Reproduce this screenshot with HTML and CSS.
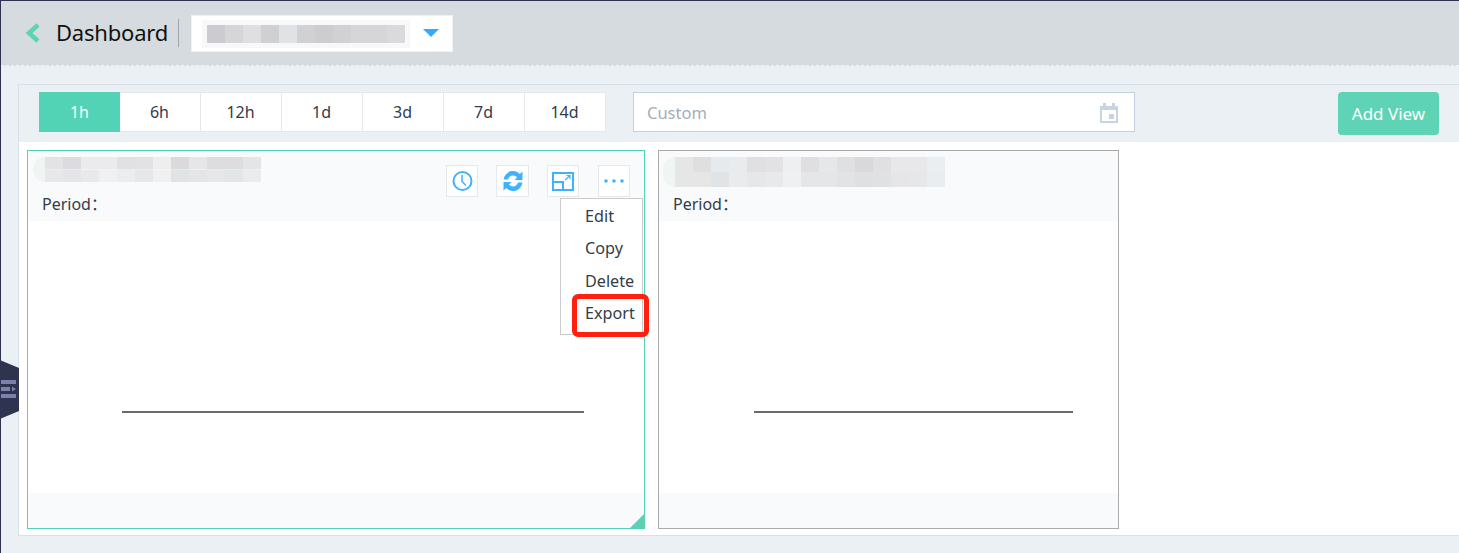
FILE: index.html
```html
<!DOCTYPE html>
<html lang="en">
<head>
    <meta charset="utf-8">
    <title>Dashboard</title>
    <link rel="stylesheet" href="styles.css">
</head>
<body>
    <div class="side-handle">
        <svg width="19" height="60" viewBox="0 0 19 60">
            <path d="M0 0 19 8V51L0 59Z" fill="#2e3350"/>
            <path d="M1 20H16V24H1ZM1 27H10V31H1ZM12 26.500 16 29 12 31.500ZM1 34H16V38H1Z" fill="#7c81a9"/>
        </svg>
    </div>
    <div class="page-head">
        <svg class="back-icon" width="16" height="20" viewBox="0 0 16 20">
            <path d="M13 2 4 10 13 18" fill="none" stroke="#5cd3b3" stroke-width="4.500"/>
        </svg>
        <span class="page-title">Dashboard</span>
        <div class="board-select">
            <div class="mosaic-select"></div>
            <span class="select-arrow"></span>
        </div>
    </div>
    <div class="main">
        <div class="panel">
            <div class="toolbar">
                <ul class="range-tabs">
                    <li class="active">1h</li>
                    <li>6h</li>
                    <li>12h</li>
                    <li>1d</li>
                    <li>3d</li>
                    <li>7d</li>
                    <li>14d</li>
                </ul>
                <div class="custom-range">
                    <span>Custom</span>
                    <svg width="18" height="20" viewBox="0 0 18 20">
                        <path d="M0 3H3V0H6V3H12V0H15V3H18V20H0ZM2 7V18H16V7ZM9 11H14V16H9Z" fill="#c8d3e3" fill-rule="evenodd"/>
                    </svg>
                </div>
                <button class="add-view">Add View</button>
            </div>
            <div class="cards">
                <div class="card card-active">
                    <div class="card-head">
                        <div class="card-info">
                            <div class="mosaic-title mosaic-one"></div>
                            <div class="period">Period：</div>
                        </div>
                        <div class="card-actions">
                            <span class="action-btn">
                                <svg width="22" height="22" viewBox="0 0 22 22" fill="none" stroke="#3fb2ff">
                                    <circle cx="11.500" cy="11" r="9" stroke-width="2"/>
                                    <path d="M11 5V11.500L15 15.500" stroke-width="1.500"/>
                                </svg>
                            </span>
                            <span class="action-btn action-wide">
                                <svg width="22" height="22" viewBox="0 0 22 22" fill="#3fb2ff">
                                    <path d="M1.500 9.500C2.500 4 7 0.500 11.500 1C14 1.300 16.200 2.300 17.800 4L20.500 1.500V10H12.500L15 7.500C14 6.300 12.800 5.700 11.300 5.600C8.800 5.500 6.800 7 6 9.500Z"/>
                                    <path d="M20.500 12.500C19.500 18 15 21.500 10.500 21C8 20.700 5.800 19.700 4.200 18L1.500 20.500V12H9.500L7 14.500C8 15.700 9.200 16.300 10.700 16.400C13.200 16.500 15.200 15 16 12.500Z"/>
                                </svg>
                            </span>
                            <span class="action-btn">
                                <svg width="24" height="22" viewBox="0 0 24 22" fill="none" stroke="#3fb2ff" stroke-width="2">
                                    <path d="M2 3H22V20H2Z"/>
                                    <path d="M2 12H12V20"/>
                                    <path d="M14 10 19 5.500M15.500 5.500H19V9" stroke-width="1.200"/>
                                </svg>
                            </span>
                            <span class="action-btn action-last">
                                <svg width="22" height="6" viewBox="0 0 22 6" fill="#3fb2ff">
                                    <circle cx="3" cy="3" r="1.800"/>
                                    <circle cx="11" cy="3" r="1.800"/>
                                    <circle cx="19" cy="3" r="1.800"/>
                                </svg>
                            </span>
                        </div>
                    </div>
                    <div class="card-body">
                        <div class="axis-line axis-long"></div>
                    </div>
                    <div class="card-foot"></div>
                    <span class="resize-corner"></span>
                    <ul class="card-menu">
                        <li>Edit</li>
                        <li>Copy</li>
                        <li>Delete</li>
                        <li>Export</li>
                    </ul>
                    <span class="highlight-box"></span>
                </div>
                <div class="card card-plain">
                    <div class="card-head">
                        <div class="card-info">
                            <div class="mosaic-title mosaic-two"></div>
                            <div class="period period-two">Period：</div>
                        </div>
                    </div>
                    <div class="card-body">
                        <div class="axis-line axis-short"></div>
                    </div>
                    <div class="card-foot"></div>
                </div>
            </div>
        </div>
    </div>
</body>
</html>
```

FILE: styles.css
```css
* {
    margin: 0;
    padding: 0;
    box-sizing: border-box;
}

body {
    height: 553px;
    overflow: hidden;
    background: #ebf0f4;
    border-top: 1px solid #2e3350;
    border-left: 1px solid #2e3350;
    color: #333c48;
    font-family: 'Noto Sans', 'Noto Sans CJK SC', sans-serif;
    font-size: 16px;
    position: relative;
}

ul {
    list-style: none;
}

.side-handle {
    position: absolute;
    left: -1px;
    top: 359px;
    height: 60px;
    z-index: 3;
}

.page-head {
    height: 65px;
    background: #d5dbde;
    border-bottom: 1px dashed #f1f4f6;
    display: flex;
    align-items: center;
    padding-left: 24px;
}

.back-icon {
    flex: none;
}

.page-title {
    margin-left: 15px;
    padding: 0 10px 2px 0;
    font-size: 22px;
    letter-spacing: -0.2px;
    color: #111;
    line-height: 26px;
    border-right: 1px solid #9ea6aa;
}

.board-select {
    width: 262px;
    height: 37px;
    margin-left: 12px;
    background: #fff;
    border: 1px solid #eef1f3;
    display: flex;
    align-items: center;
    padding-left: 15px;
}

.mosaic-select {
    width: 198px;
    height: 18px;
    margin-top: 1px;
    background: linear-gradient(90deg, #ccccd0 0 18px, #d6d6d9 0 36px, #dfdfe1 0 54px, #d0d0d3 0 72px, #e1e2e5 0 90px, #d1d1d4 0 108px, #cdcdd0 0 126px, #d1d1d3 0 144px, #d6d6d8 0 162px, #d6d6d8 0 180px, #dadadc 0 198px);
    box-shadow: 0 0 0 5px #f6f8f9;
}

.select-arrow {
    margin-left: 18px;
    border-left: 8px solid transparent;
    border-right: 8px solid transparent;
    border-top: 8px solid #36a9ff;
}

.main {
    padding: 18px 0 17px 17px;
    height: 487px;
}

.panel {
    height: 452px;
    background: #fff;
    border: 1px solid #d8e1e9;
    border-right: 0;
}

.toolbar {
    height: 57px;
    background: #ebf0f4;
    padding: 7px 20px 0;
    display: flex;
    align-items: flex-start;
}

.range-tabs {
    display: flex;
    flex: none;
    width: 567px;
    height: 40px;
    background: #fff;
    border-top: 1px solid #e4e8ec;
    border-bottom: 1px solid #e4e8ec;
}

.range-tabs li {
    flex: none;
    width: 81px;
    padding-right: 1px;
    line-height: 39px;
    text-align: center;
    border-right: 1px solid #e4e8ec;
}

.range-tabs .active {
    background: #53d3b6;
    color: #fff;
    margin: -1px 0;
    height: 40px;
    padding-right: 0;
    line-height: 40px;
    border-right: 0;
}

.custom-range {
    width: 502px;
    height: 40px;
    margin-left: 27px;
    background: #fff;
    border: 1px solid #c3d0df;
    display: flex;
    align-items: center;
    justify-content: space-between;
    padding: 1px 16px 0 13px;
    font-size: 16.500px;
    color: #a3adbb;
}

.add-view {
    width: 101px;
    height: 43px;
    margin-left: auto;
    background: #5fd3b5;
    border: 0;
    border-radius: 4px;
    color: #fff;
    font-family: inherit;
    font-size: 17px;
}

.cards {
    display: flex;
    gap: 13px;
    padding: 8px;
}

.card {
    height: 379px;
    position: relative;
    display: flex;
    flex-direction: column;
}

.card-active {
    width: 618px;
    border: 1px solid #53d3b6;
}

.card-plain {
    width: 461px;
    border: 1px solid #aaa;
}

.card-head {
    height: 70px;
    flex: none;
    background: #f9fafc;
    display: flex;
    justify-content: space-between;
}

.mosaic-title {
    position: relative;
    margin-top: 6px;
    background-repeat: no-repeat;
    background-size: 100% 50%;
    background-position: top, bottom;
}

/* smear left of the blurred title */
.mosaic-title::before {
    content: '';
    position: absolute;
    left: -12px;
    top: 0;
    width: 12px;
    height: 100%;
    background: #f0f5f4;
    border-radius: 12px 0 0 12px;
}

.mosaic-one {
    width: 216px;
    height: 25px;
    margin-left: 17px;
    background-image:
        linear-gradient(90deg, #e3e3e5 0 18px, #dcdce0 0 36px, #ebebed 0 72px, #e0e1e3 0 90px, #e2e2e4 0 108px, #eeeeef 0 126px, #dadadc 0 144px, #e6e6e8 0 162px, #dddde0 0 198px, #e3e5e6 0 216px),
        linear-gradient(90deg, #e8e8ea 0 18px, #e6e6e8 0 36px, #e9e9ea 0 54px, #eff0f1 0 72px, #ecedee 0 90px, #e7e7e9 0 108px, #f0f0f1 0 126px, #e1e4e5 0 144px, #e4e5e7 0 162px, #e6e7e8 0 180px, #e3e6e7 0 198px, #e9ebec 0 216px);
}

.mosaic-two {
    width: 270px;
    height: 30px;
    margin-left: 16px;
    background-image:
        linear-gradient(90deg, #e6e6e6 0 18px, #dfdfdf 0 36px, #e6eaec 0 54px, #e9ebed 0 72px, #e0e0e3 0 90px, #e2e2e4 0 108px, #eeeff0 0 126px, #dfdfe1 0 144px, #e5e7e8 0 162px, #e0e0e1 0 180px, #d9d9db 0 198px, #e0e0e3 0 216px, #e8e8ea 0 252px, #ebeef0 0 270px),
        linear-gradient(90deg, #e6e6e6 0 36px, #e0e4e6 0 54px, #e9ebed 0 72px, #e6e7e9 0 90px, #e8e9eb 0 108px, #eff0f1 0 126px, #e5e6e7 0 144px, #e4e6e7 0 162px, #e2e3e4 0 180px, #e0e0e2 0 198px, #e0e1e3 0 216px, #e6e6e8 0 234px, #e6e7e9 0 252px, #eaedf0 0 270px);
}

.period {
    margin: 10px 0 0 14px;
    line-height: 24px;
}

.period-two {
    margin-top: 5px;
}

.card-actions {
    display: flex;
    gap: 18px;
    padding: 14px 14px 0 0;
}

.action-btn {
    width: 32px;
    height: 32px;
    background: #fff;
    border: 1px solid #e6e9ec;
    display: flex;
    align-items: center;
    justify-content: center;
}

.action-wide {
    width: 33px;
}

.action-last {
    margin-left: 1px;
}

.card-body {
    flex: 1;
    background: #fff;
}

.axis-line {
    height: 2px;
    margin-top: 190px;
    background: #6c6c6c;
}

.axis-long {
    width: 462px;
    margin-left: 94px;
}

.axis-short {
    width: 319px;
    margin-left: 95px;
}

.card-foot {
    height: 35px;
    flex: none;
    background: #f9fafc;
}

.resize-corner {
    position: absolute;
    right: 0;
    bottom: 0;
    width: 14px;
    height: 14px;
    background: #5dd0b3;
    clip-path: polygon(100% 0, 100% 100%, 0 100%);
}

.card-menu {
    position: absolute;
    left: 532px;
    top: 47px;
    width: 83px;
    height: 137px;
    background: #fff;
    border: 1px solid #ccc;
    padding: 0.700px 0 0 24px;
    font-size: 16.200px;
    z-index: 2;
}

.card-menu li {
    height: 32.500px;
    line-height: 32px;
}

.highlight-box {
    position: absolute;
    left: 544px;
    top: 143px;
    width: 77px;
    height: 43px;
    border: 5px solid #ff2010;
    border-radius: 6px;
    z-index: 2;
}
```
